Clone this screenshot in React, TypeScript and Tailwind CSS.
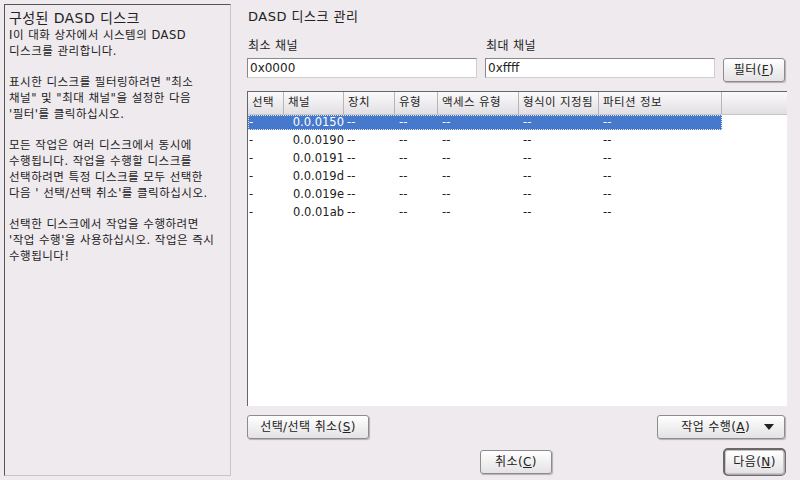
const font = { fontFamily: '"DejaVu Sans", "Noto Sans CJK KR", sans-serif' }

const rows = ['0.0.0150', '0.0.0190', '0.0.0191', '0.0.019d', '0.0.019e', '0.0.01ab']

const cols = [
  { label: '선택', w: 'w-[36px]' },
  { label: '채널', w: 'w-[60px]' },
  { label: '장치', w: 'w-[51px]' },
  { label: '유형', w: 'w-[43px]' },
  { label: '액세스 유형', w: 'w-[81px]' },
  { label: '형식이 지정됨', w: 'w-[80px]' },
  { label: '파티션 정보', w: 'w-[123px]' },
]

const help = [
  ['I이 대화 상자에서 시스템의 DASD', '디스크를 관리합니다.'],
  ['표시한 디스크를 필터링하려면 "최소', '채널" 및 "최대 채널"을 설정한 다음', "'필터'를 클릭하십시오."],
  ['모든 작업은 여러 디스크에서 동시에', '수행됩니다. 작업을 수행할 디스크를', '선택하려면 특정 디스크를 모두 선택한', "다음 ' 선택/선택 취소'를 클릭하십시오."],
  ['선택한 디스크에서 작업을 수행하려면', "'작업 수행'을 사용하십시오. 작업은 즉시", '수행됩니다!'],
]

function Btn({ children, className = '' }: { children: React.ReactNode; className?: string }) {
  return (
    <button
      className={`h-[24px] rounded-[3px] border border-[#8e8a8e] bg-gradient-to-b from-[#ffffff] to-[#e4e2e4] shadow-[1px_1px_1px_#b4b0b4] text-[12px] tracking-[0.4px] text-[#222] flex items-center justify-center ${className}`}
    >
      {children}
    </button>
  )
}

export default function App() {
  return (
    <div className="w-[800px] h-[480px] bg-[#eeeaee] flex text-[#222]" style={font}>
      {/* help panel */}
      <div className="ml-[4px] mt-[4px] w-[227px] h-[472px] border-l border-t border-l-[#555] border-t-[#555] border-r border-b border-r-[#c8c4c8] border-b-[#c8c4c8] px-[4px] pt-[4px]">
        <div className="text-[14px] leading-[18px] tracking-[0.4px]">구성된 DASD 디스크</div>
        <div className="text-[11.5px] tracking-[0.5px] flex flex-col gap-[15px]">
          {help.map((p, i) => (
            <div key={i} className="flex flex-col">
              {p.map((line) => (
                <div key={line} className="h-[16px] leading-[16px] whitespace-nowrap overflow-visible">
                  {line}
                </div>
              ))}
            </div>
          ))}
        </div>
      </div>

      {/* main */}
      <div className="ml-[16px] w-[540px] flex flex-col">
        <div className="mt-[9px] ml-[1px] text-[13px] leading-[16px] tracking-[0.5px]">DASD 디스크 관리</div>

        <div className="mt-[14px] flex items-end">
          <div className="flex flex-col w-[230px]">
            <span className="text-[12px] leading-[14px] ml-[1px] tracking-[0.4px]">최소 채널</span>
            <div className="mt-[5px] h-[20px] bg-white border border-[#8a868a] border-b-[#d0ccd0] border-r-[#d0ccd0] text-[12px] leading-[18px] px-[2px]">0x0000</div>
          </div>
          <div className="flex flex-col w-[230px] ml-[8px]">
            <span className="text-[12px] leading-[14px] ml-[1px] tracking-[0.4px]">최대 채널</span>
            <div className="mt-[5px] h-[20px] bg-white border border-[#8a868a] border-b-[#d0ccd0] border-r-[#d0ccd0] text-[12px] leading-[18px] px-[2px]">0xffff</div>
          </div>
          <Btn className="ml-[8px] w-[62px] mb-[-4px]">
            필터(<span className="underline">F</span>)
          </Btn>
        </div>

        {/* table */}
        <div className="mt-[13px] h-[315px] bg-white border-l border-t border-[#666] flex flex-col">
          <div className="flex h-[23px] bg-gradient-to-b from-[#fbfafb] to-[#e2dfe2] border-b border-[#c8c4c8] text-[11.5px] tracking-[0.4px]">
            {cols.map((c) => (
              <div key={c.label} className={`${c.w} border-r border-[#b8b4b8] pl-[4px] flex items-center`}>
                {c.label}
              </div>
            ))}
            <div className="flex-1" />
          </div>
          {rows.map((r, i) => (
            <div
              key={r}
              className={`flex w-[474px] items-center text-[11.5px] ${i === 0 ? 'h-[15px] mb-[2px] bg-[#4679cb] text-white outline-1 outline-dotted outline-[#dde6f6] -outline-offset-1' : 'h-[18px] text-[#222]'}`}
            >
              <div className="w-[36px] pl-[1px]">-</div>
              <div className="w-[60px] text-right">{r}</div>
              <div className="w-[51px] pl-[3px]">--</div>
              <div className="w-[43px] pl-[4px]">--</div>
              <div className="w-[81px] pl-[4px]">--</div>
              <div className="w-[80px] pl-[4px]">--</div>
              <div className="w-[123px] pl-[4px]">--</div>
            </div>
          ))}
        </div>

        <div className="mt-[9px] flex justify-between">
          <Btn className="w-[122px]">
            선택/선택 취소(<span className="underline">S</span>)
          </Btn>
          <Btn className="w-[128px] mr-[2px] justify-end pr-[10px] gap-[14px]">
            <span>
              작업 수행(<span className="underline">A</span>)
            </span>
            <svg width="10" height="6" viewBox="0 0 10 6">
              <path d="M0 0 L10 0 L5 6 Z" fill="#222" />
            </svg>
          </Btn>
        </div>

        <div className="mt-[9px] flex items-center">
          <Btn className="ml-[233px] w-[72px]">
            취소(<span className="underline">C</span>)
          </Btn>
          <div className="ml-[171px] rounded-[5px] border-2 border-[#6a666a]">
            <Btn className="w-[59px] h-[23px] border-[#c8c4c8]">
              다음(<span className="underline">N</span>)
            </Btn>
          </div>
        </div>
      </div>
    </div>
  )
}
